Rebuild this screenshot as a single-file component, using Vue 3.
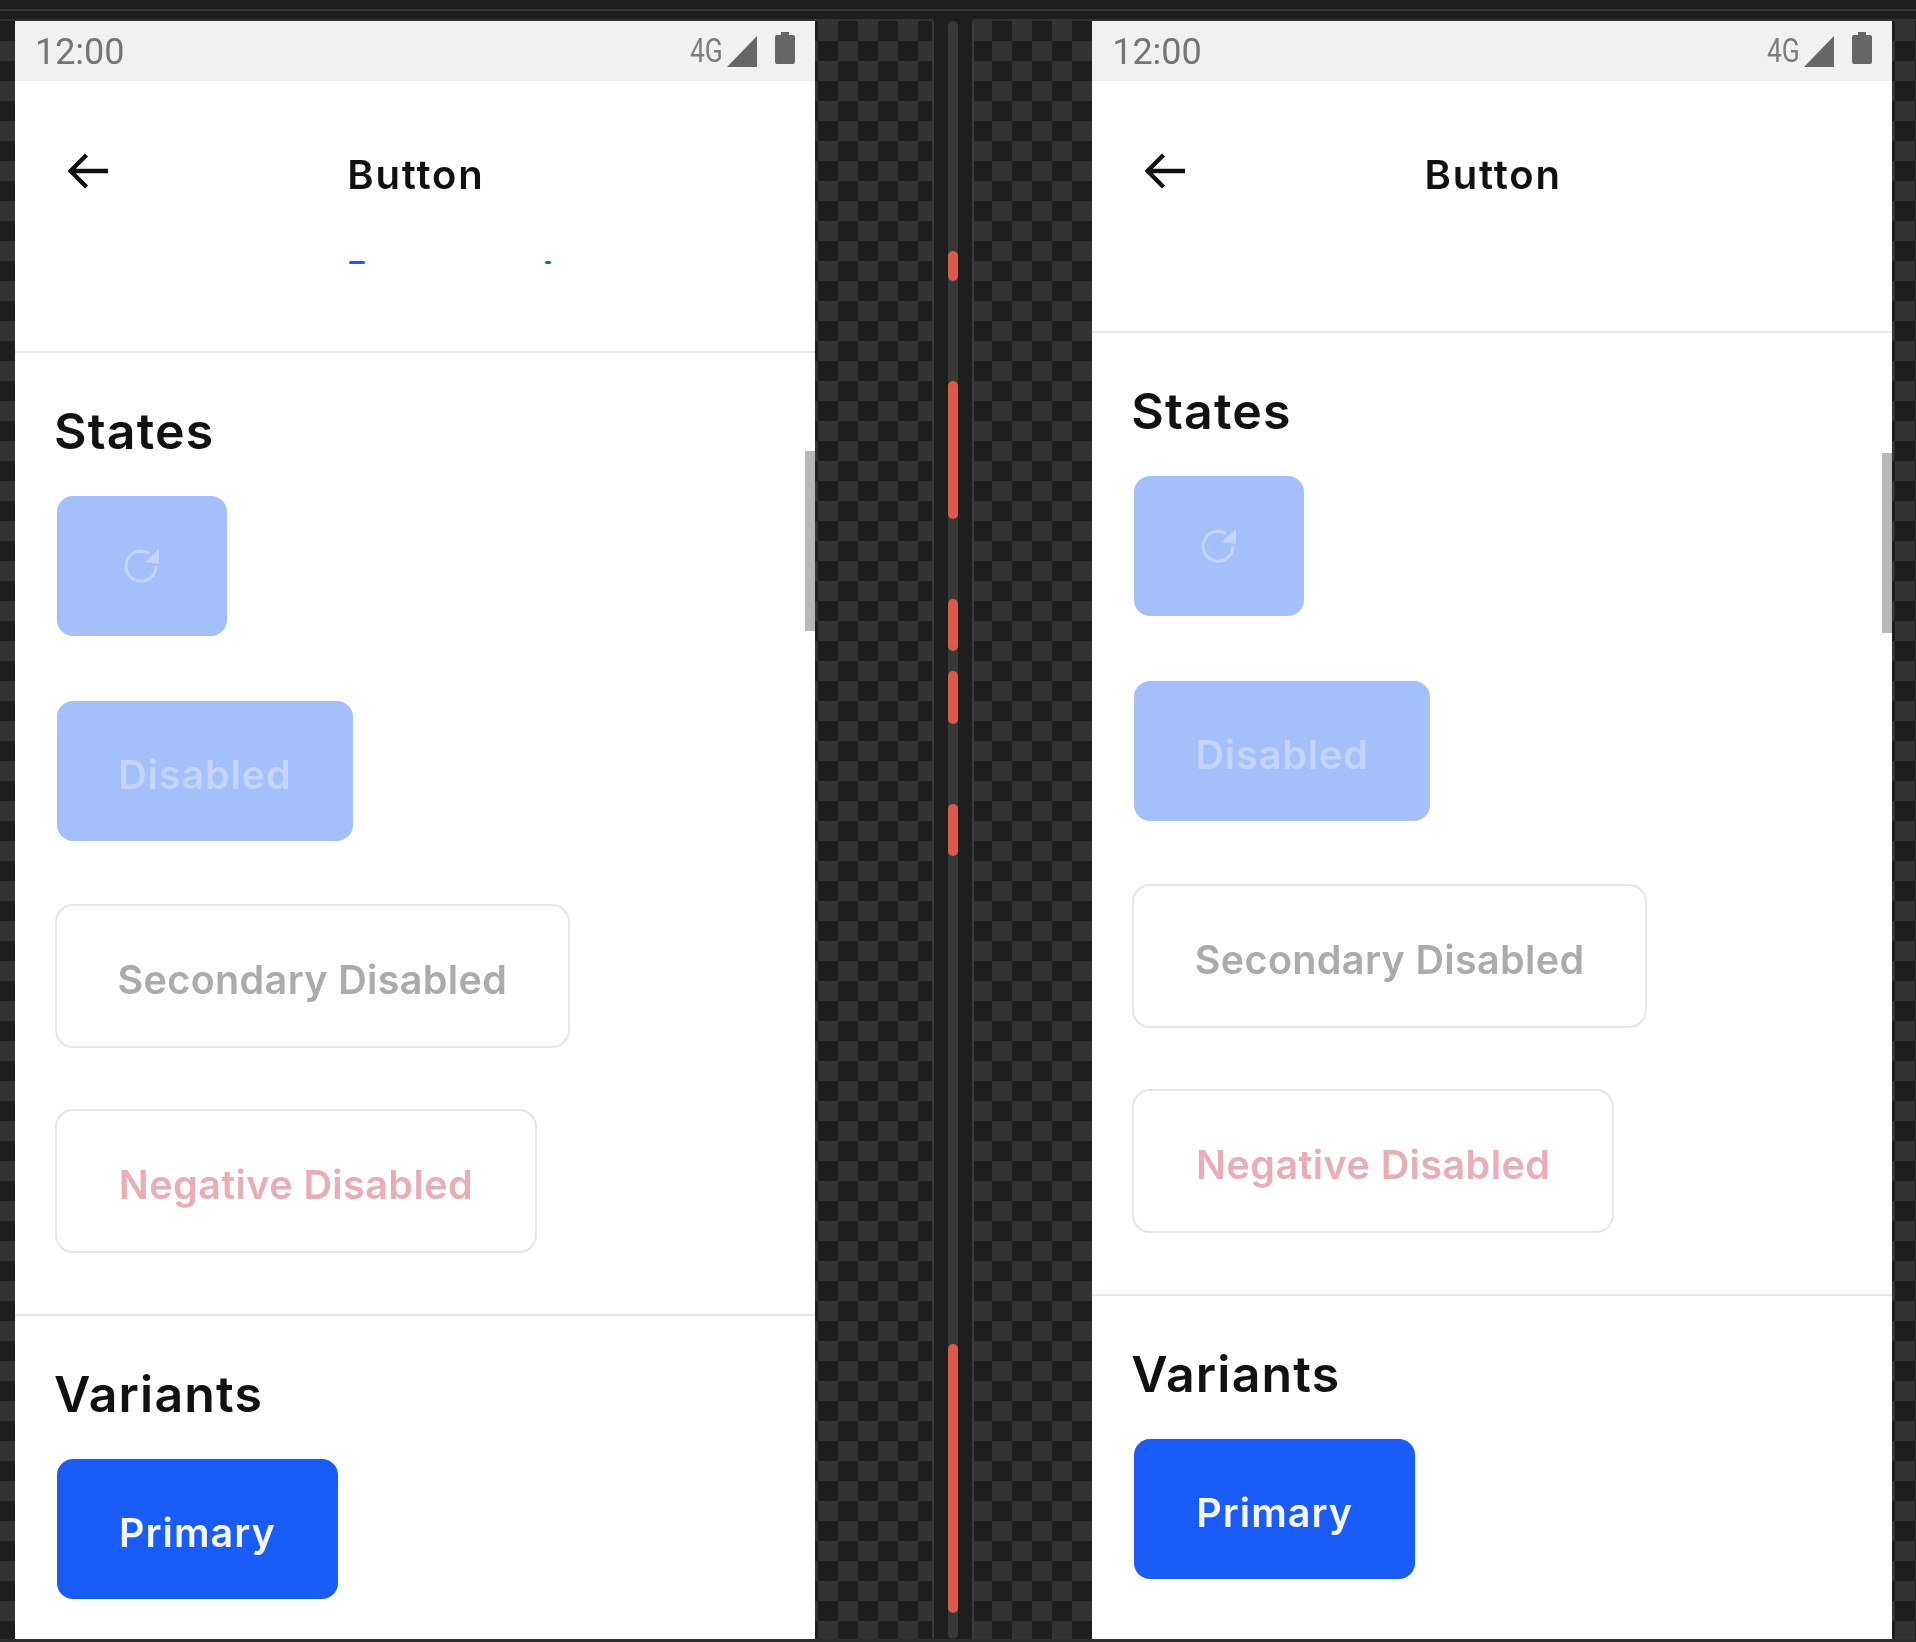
<template>
  <div class="screen">
    <div class="topbar">
      <div class="topline"></div>
      <div class="toprule">
        <div class="rule-left"></div>
        <div class="rule-right"></div>
      </div>
    </div>

    <div class="stage">
      <div class="checker edge-left"></div>

      <template v-for="(phone, i) in phones" :key="i">
        <div class="phone">
          <div class="status">
            <span class="time soft">12:00</span>
            <div class="status-icons soft">
              <span class="network">4G</span>
              <svg class="signal" width="30" height="31" viewBox="0 0 30 31">
                <path d="M30 0V31H0Z" fill="#666" />
              </svg>
              <svg class="battery" width="20" height="32" viewBox="0 0 20 32">
                <path d="M6 0h8v3h4a2 2 0 0 1 2 2v25a2 2 0 0 1-2 2H2a2 2 0 0 1-2-2V5a2 2 0 0 1 2-2h4Z" fill="#666" />
              </svg>
            </div>
          </div>

          <div class="header" :class="{ tall: phone.dashes }">
            <div class="toolbar soft">
              <svg class="back" width="40" height="36" viewBox="0 0 40 36">
                <path d="M40 18H3M18.5 2 2.5 18l16 16" fill="none" stroke="#111" stroke-width="4.4" />
              </svg>
              <span class="title">Button</span>
            </div>
            <div v-if="phone.dashes" class="dashes soft">
              <i class="dash-a"></i>
              <i class="dash-b"></i>
            </div>
          </div>

          <section class="section states">
            <h2 class="soft">States</h2>
            <div class="btn-list soft">
              <button class="btn fill-off icon-btn">
                <svg class="refresh" width="36" height="36" viewBox="0 0 36 36">
                  <path d="M25 6.5A15 15 0 1 0 32 19" fill="none" stroke="#c4d4fb" stroke-width="3" />
                  <path d="M35 2V17L21 15Z" fill="#c4d4fb" />
                </svg>
              </button>
              <button class="btn fill-off wide">Disabled</button>
              <button class="btn outline sec-off">Secondary Disabled</button>
              <button class="btn outline neg-off">Negative Disabled</button>
            </div>
          </section>

          <section class="section">
            <h2 class="soft">Variants</h2>
            <div class="btn-list soft">
              <button class="btn primary">Primary</button>
            </div>
          </section>

          <div class="scroll-thumb" :class="{ lower: !phone.dashes }"></div>
        </div>

        <template v-if="i === 0">
          <div class="checker mid-left"></div>
          <div class="gutter">
            <div class="track">
              <div
                v-for="mark in marks"
                :key="mark.top"
                class="mark"
                :style="{ top: mark.top + 'px', height: mark.height + 'px' }"
              ></div>
            </div>
          </div>
          <div class="checker mid-right"></div>
        </template>
      </template>

      <div class="checker edge-right"></div>
    </div>
    <div class="bottom-strip"></div>
  </div>
</template>

<script setup>
const phones = [{ dashes: true }, { dashes: false }];

// offsets from the top of the track
const marks = [
  { top: 230, height: 30 },
  { top: 360, height: 138 },
  { top: 578, height: 52 },
  { top: 650, height: 53 },
  { top: 783, height: 52 },
  { top: 1323, height: 269 },
];
</script>

<style scoped>
.screen {
  width: 1916px;
  height: 1642px;
  background: #1e1e1e;
  overflow: hidden;
  font-family: Inter, "Liberation Sans", sans-serif;
}

.topbar {
  height: 21px;
  overflow: hidden;
}

.topline {
  height: 2px;
  margin-top: 9px;
  background: #3a3a3a;
}

.toprule {
  display: flex;
  gap: 40px;
  margin-top: 8px;
}

.rule-left {
  width: 933px;
  height: 2px;
  background: #333;
}

.rule-right {
  flex: 1;
  height: 2px;
  background: #333;
}

.stage {
  display: flex;
  height: 1618px;
}

.bottom-strip {
  height: 3px;
  background: #2e2e2e;
}

.checker {
  background-image: repeating-conic-gradient(#333 0 25%, #1e1e1e 0 50%);
  background-size: 40px 40px;
}

.edge-left {
  width: 15px;
}

.mid-left {
  width: 118px;
  background-position: -17px 0;
  border-right: 2px solid #3a3a3a;
  background-clip: padding-box;
}

.mid-right {
  width: 119px;
  background-position: -22px 0;
  border-left: 2px solid #3a3a3a;
}

.edge-right {
  width: 24px;
  background-position: -17px 0;
}

.gutter {
  width: 38px;
  display: flex;
  justify-content: center;
}

.track {
  position: relative;
  width: 10px;
  height: 100%;
  border-radius: 5px;
  background: #383838;
}

.mark {
  position: absolute;
  left: 0;
  width: 10px;
  border-radius: 5px;
  background: #db5b4a;
}

.phone {
  position: relative;
  width: 800px;
  flex-shrink: 0;
  background: #fff;
  overflow: hidden;
}

.soft {
  filter: blur(0.6px);
}

.status {
  display: flex;
  align-items: center;
  justify-content: space-between;
  height: 60px;
  padding: 0 20px 0 20px;
  background: #f1f1f1;
  font-family: Roboto, sans-serif;
  color: #757575;
}

.time {
  font-size: 36px;
  line-height: 42px;
  margin-top: 1px;
}

.status-icons {
  display: flex;
  align-items: flex-start;
  height: 59px;
}

.network {
  width: 33px;
  margin-top: 14px;
  font-size: 33px;
  line-height: 30px;
  transform: scaleX(0.8);
  transform-origin: left;
  color: #7c7c7c;
  white-space: nowrap;
}

.signal {
  margin: 14px 0 0 4px;
}

.battery {
  margin: 10px 0 0 18px;
}

.header {
  border-bottom: 2px solid #e6e7ec;
  box-sizing: border-box;
  height: 252px;
}

.header.tall {
  height: 272px;
}

.toolbar {
  position: relative;
  display: flex;
  align-items: center;
  justify-content: center;
  height: 186px;
}

.back {
  position: absolute;
  left: 53px;
  top: 72px;
}

.title {
  font-size: 40px;
  font-weight: 600;
  letter-spacing: 1.8px;
  margin-left: 2px;
  color: #111;
}

.dashes {
  position: relative;
  display: flex;
  height: 4px;
  margin-top: -6px;
  padding-left: 334px;
}

.dashes i {
  display: block;
  height: 3px;
  background: #1b5cf6;
  border-radius: 2px;
}

.dash-a {
  width: 16px;
}

.dash-b {
  width: 6px;
  margin-left: 180px;
}

.section {
  padding: 0 40px 61px;
  border-bottom: 2px solid #e6e7ec;
}

.section:last-of-type {
  border-bottom: 0;
}

.section h2 {
  margin: 0 0 0 -1px;
  padding-top: 50px;
  font-size: 50px;
  line-height: 56px;
  font-weight: 600;
  letter-spacing: 1.2px;
  color: #111;
  height: 141px;
  box-sizing: border-box;
}

.btn-list {
  display: flex;
  flex-direction: column;
  align-items: flex-start;
  gap: 61px;
}

.btn {
  height: 144px;
  padding: 8px 61px 0;
  border: 2px solid transparent;
  border-radius: 18px;
  background-clip: padding-box;
  font-family: Inter, "Liberation Sans", sans-serif;
  font-size: 39.5px;
  font-weight: 600;
  letter-spacing: 0.2px;
  white-space: nowrap;
}

.icon-btn {
  width: 174px;
  padding: 0;
  display: flex;
  align-items: center;
  justify-content: center;
}

.refresh {
  margin-top: -2px;
}

.fill-off {
  background-color: #a5bffa;
  color: #c4d4fb;
}

.wide {
  width: 300px;
  padding-left: 0;
  padding-right: 0;
  letter-spacing: 0.9px;
}

.primary {
  width: 285px;
  padding-left: 0;
  padding-right: 0;
  letter-spacing: 1px;
  background-color: #1a5cf7;
  color: #f4f7ff;
}

.outline {
  background: #fff;
  border-color: #e6e6e8;
}

.sec-off {
  width: 515px;
  padding-left: 0;
  padding-right: 0;
  color: #ababab;
  letter-spacing: 0.35px;
}

.neg-off {
  width: 482px;
  padding-left: 0;
  padding-right: 0;
  color: #e9adb5;
  letter-spacing: 0.42px;
}

.scroll-thumb {
  position: absolute;
  right: 0;
  top: 430px;
  width: 10px;
  height: 180px;
  background: #b8b8b8;
}

.scroll-thumb.lower {
  top: 432px;
}
</style>
